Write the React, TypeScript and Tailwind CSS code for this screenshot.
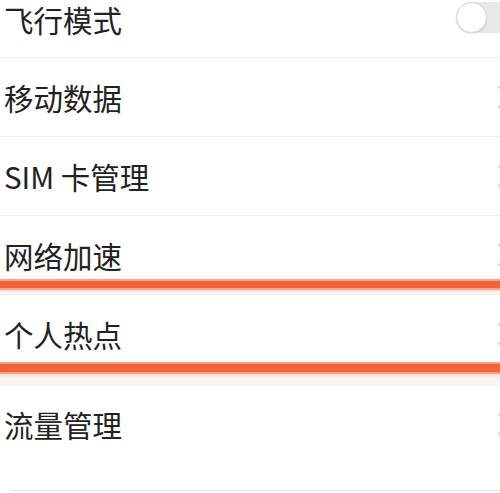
import React from "react";

const rows = ["移动数据", "SIM 卡管理", "网络加速", "个人热点"];

const Chevron = () => (
  <svg width="14" height="26" viewBox="0 0 14 26" className="shrink-0 -mr-[10px]">
    <path d="M3 3 L11 13 L3 23" fill="none" stroke="#cfcfcf" strokeWidth="2" strokeLinecap="round" />
  </svg>
);

const Toggle = () => (
  <div className="relative -mt-[2px] h-[31px] w-[60px] shrink-0 -mr-[16px] rounded-full bg-[#e8e8e8]">
    <div className="absolute left-0 top-0 h-[31px] w-[31px] rounded-full border border-[#d8d8d8] bg-white shadow-[0_1px_2px_rgba(0,0,0,0.1)]" />
  </div>
);

const App = () => {
  return (
    <div
      className="relative h-[493px] w-[500px] overflow-hidden bg-white text-[#222]"
      style={{ fontFamily: '"Noto Sans CJK SC", "Liberation Sans", sans-serif' }}
    >
      <div className="flex flex-col">
        {/* first row is scrolled partly out of view */}
        <div className="flex h-[58px] items-start justify-between border-b border-[#ececec] pl-[4px] pt-[4px]">
          <span className="text-[29.5px] leading-[30px]">飞行模式</span>
          <Toggle />
        </div>
        {rows.map((label) => (
          <div key={label} className="flex h-[79px] items-center justify-between border-b border-[#ececec] pl-[4px]">
            <span className="text-[29.5px] leading-[30px]">{label}</span>
            <Chevron />
          </div>
        ))}
        <div className="h-[12px] bg-[#faf4f2]" />
        <div className="flex h-[76px] items-center justify-between pl-[4px]">
          <span className="text-[29.5px] leading-[30px]">流量管理</span>
          <Chevron />
        </div>
        <div className="ml-[10px] mt-[28px] h-[1px] bg-[#e6e6e6]" />
      </div>

      {/* orange highlight marks */}
      <div className="absolute left-0 top-[279px] h-[11px] w-full border-y-2 border-[#f2a584] bg-[#f3623a] shadow-[0_2px_3px_rgba(250,200,170,0.6)]" />
      <div className="absolute left-0 top-[362px] h-[12px] w-full border-y-2 border-[#f2a584] bg-[#f3623a] shadow-[0_2px_3px_rgba(250,200,170,0.6)]" />
    </div>
  );
};

export default App;
